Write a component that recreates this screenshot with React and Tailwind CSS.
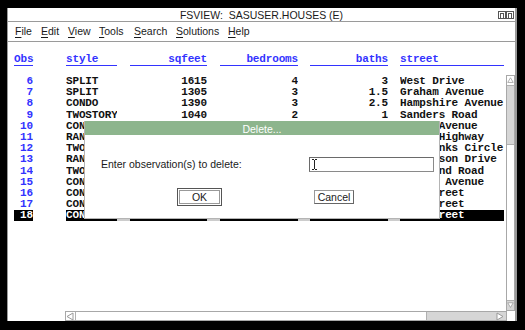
import React from "react";

const rows = [
  ["6", "SPLIT", "1615", "4", "3", "West Drive"],
  ["7", "SPLIT", "1305", "3", "1.5", "Graham Avenue"],
  ["8", "CONDO", "1390", "3", "2.5", "Hampshire Avenue"],
  ["9", "TWOSTORY", "1040", "2", "1", "Sanders Road"],
  ["10", "CONDO", "2105", "4", "2.5", "Jones Avenue"],
  ["11", "RANCH", "1535", "3", "3", "Ocean Highway"],
  ["12", "TWOSTORY", "1240", "2", "2", "Fairbanks Circle"],
  ["13", "RANCH", "720", "1", "1", "Jefferson Drive"],
  ["14", "TWOSTORY", "1745", "4", "2.5", "Highland Road"],
  ["15", "CONDO", "1860", "2", "2", "Market Avenue"],
  ["16", "CONDO", "1200", "3", "2", "Elm Street"],
  ["17", "CONDO", "1325", "2", "1.5", "Oak Street"],
  ["18", "CONDO", "1425", "2", "1", "Fox Street"],
];

const cols = [
  "w-[19px] ml-[6px] text-right",
  "w-[51px] ml-[33px] text-left",
  "w-[77px] ml-[13px] text-right",
  "w-[78px] ml-[13px] text-right",
  "w-[78px] ml-[12px] text-right",
  "w-[104px] ml-[12px] text-left",
];

const headers = ["Obs", "style", "sqfeet", "bedrooms", "baths", "street"];
const headerAlign = [
  "w-[19px] ml-[6px] text-left",
  "w-[51px] ml-[33px] text-left",
  "w-[77px] ml-[13px] text-right",
  "w-[78px] ml-[13px] text-right",
  "w-[78px] ml-[12px] text-right",
  "w-[104px] ml-[12px] text-left",
];

function Mn({ k, rest, w }) {
  return (
    <span className={`${w} shrink-0`}>
      <span className="underline underline-offset-[2px] decoration-1">{k}</span>
      {rest}
    </span>
  );
}

function WinIcon() {
  return (
    <svg width="8" height="8" viewBox="0 0 8 8" className="block">
      <rect x="0.5" y="0.5" width="7" height="7" fill="white" stroke="#555" />
      <rect x="2.5" y="2.5" width="3" height="5" fill="none" stroke="#555" />
    </svg>
  );
}

function Arrow({ dir }) {
  const pts = {
    up: "1,7 4.5,1 8,7",
    down: "1,1 4.5,7 8,1",
    left: "7,1 1,4.5 7,8",
    right: "1,1 7,4.5 1,8",
  }[dir];
  return (
    <svg width="9" height="9" viewBox="0 0 9 9" className="block">
      <polygon points={pts} fill="white" stroke="#9a9a9a" strokeWidth="1" />
    </svg>
  );
}

export default function App() {
  return (
    <div className="w-[525px] h-[330px] bg-black pt-[8px] pl-[7px] font-['Liberation_Sans',Arial,sans-serif] text-[10.5px] text-[#1a1a1a] overflow-hidden">
      <div className="relative w-[510px] h-[313px] bg-white border-l border-l-[#9a9a9a] border-r-2 border-r-[#9a9a9a] flex flex-col">
        {/* title */}
        <div className="h-[13px] grid grid-cols-[1fr_auto_1fr] items-center leading-none">
          <div />
          <div className="whitespace-pre pt-[1px]">FSVIEW:  SASUSER.HOUSES (E)</div>
          <div className="flex justify-end pr-[1px]">
            <WinIcon />
            <WinIcon />
          </div>
        </div>
        <div className="h-[1px] bg-[#9a9a9a]" />
        {/* menu */}
        <div className="h-[19px] flex items-center pl-[7px] leading-none">
          <Mn k="F" rest="ile" w="w-[26px]" />
          <Mn k="E" rest="dit" w="w-[27px]" />
          <Mn k="V" rest="iew" w="w-[31px]" />
          <Mn k="T" rest="ools" w="w-[35px]" />
          <Mn k="S" rest="earch" w="w-[42px]" />
          <Mn k="S" rest="olutions" w="w-[52px]" />
          <Mn k="H" rest="elp" w="w-[30px]" />
        </div>
        <div className="h-[1px] bg-[#9a9a9a]" />
        {/* main */}
        <div className="flex-1 flex flex-col min-h-0">
          <div className="flex-1 flex min-h-0">
            <div className="flex-1 pt-[12px] font-['Liberation_Mono','Courier_New',monospace] font-bold text-[11px] tracking-[-0.15px] overflow-hidden">
              <div className="flex h-[12px] leading-[11px] text-[#3333ff]">
                {headers.map((h, i) => (
                  <div key={h} className={`${headerAlign[i]} shrink-0 border-b border-[#3333ff] whitespace-pre`}>
                    {h}
                  </div>
                ))}
              </div>
              <div className="mt-[10px]">
                {rows.map((r) => {
                  const sel = r[0] === "18";
                  return (
                    <div key={r[0]} className="flex h-[11.2px] leading-[11.2px]">
                      {r.map((c, i) => (
                        <div
                          key={i}
                          className={`${cols[i]} shrink-0 whitespace-pre overflow-hidden ${
                            sel ? "bg-black text-white" : i === 0 ? "text-[#3333ff]" : "text-[#111]"
                          }`}
                        >
                          {c}
                        </div>
                      ))}
                    </div>
                  );
                })}
              </div>
            </div>
            {/* vertical scrollbar */}
            <div className="w-[9px] mt-[33px] flex flex-col border border-[#a8a8a8] bg-[#d6d6d6]">
              <div className="h-[10px] bg-white border-b border-[#b0b0b0] flex items-center justify-center">
                <Arrow dir="up" />
              </div>
              <div className="h-[58px] bg-[#d6d6d6]" />
              <div className="flex-1 bg-white border-y border-[#b0b0b0]" />
              <div className="h-[9px] bg-[#d6d6d6] flex items-center justify-center">
                <Arrow dir="down" />
              </div>
            </div>
          </div>
          {/* horizontal scrollbar row */}
          <div className="h-[10px] flex">
            <div className="w-[57px]" />
            <div className="w-[442px] h-[10px] flex border border-[#a8a8a8] bg-[#d6d6d6]">
              <div className="w-[10px] bg-white border-r border-[#b0b0b0] flex items-center justify-center">
                <Arrow dir="left" />
              </div>
              <div className="w-[351px] bg-white border-r border-[#b0b0b0]" />
              <div className="flex-1 flex items-center justify-end pr-[1px]">
                <Arrow dir="right" />
              </div>
            </div>
            <div className="flex-1 bg-white" />
          </div>
        </div>

        {/* dialog */}
        <div className="absolute left-[76px] top-[113px] w-[356px] h-[98px] bg-white border-x border-b border-[#b4b4b4] shadow-[0_2px_0_rgba(0,0,0,0.2)] flex flex-col">
          <div className="h-[14px] bg-[#8db58d] text-white text-center leading-[14px] pt-[1px] text-[10.5px]">Delete...</div>
          <div className="flex items-center mt-[22px] h-[15px]">
            <div className="w-[224px] pl-[16px] whitespace-pre">Enter observation(s) to delete:</div>
            <div className="w-[125px] h-[15px] border border-[#8a8a8a] border-t-[#6a6a6a] border-l-[#6a6a6a] bg-white flex items-center pl-[2px]">
              <svg width="5" height="11" viewBox="0 0 5 11" className="block">
                <path d="M0 0.5h2M3 0.5h2M2.5 1v9M0 10.5h2M3 10.5h2" stroke="#222" strokeWidth="1" fill="none" />
              </svg>
            </div>
          </div>
          <div className="flex items-center mt-[16px] h-[18px]">
            <div className="ml-[92px] w-[45px] h-[18px] border border-[#555] p-[1px]">
              <div className="w-full h-full border border-[#999] flex items-center justify-center leading-none">OK</div>
            </div>
            <div className="ml-[92px] w-[40px] h-[14px] border border-[#999] border-r-[#666] border-b-[#666] flex items-center justify-center leading-none">
              Cancel
            </div>
          </div>
        </div>
      </div>
    </div>
  );
}
